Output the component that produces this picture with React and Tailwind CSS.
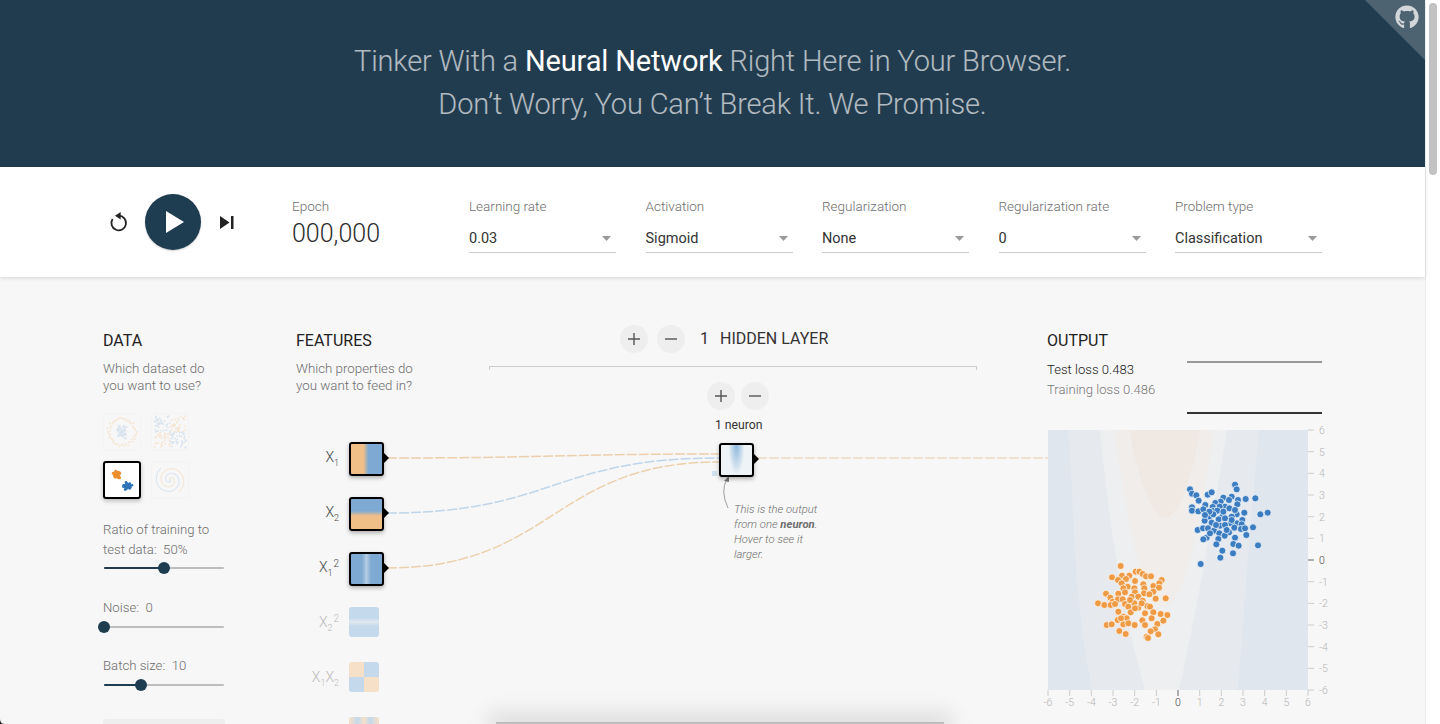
import React from "react";
import { FaGithub } from "react-icons/fa";

const font = "font-['Roboto','Liberation_Sans',sans-serif]";

function rnd(seed) {
  const v = Math.sin(seed * 127.1 + 311.7) * 43758.5453;
  return v - Math.floor(v);
}
function gauss(seed) {
  return (rnd(seed) + rnd(seed + 0.37) + rnd(seed + 0.71) - 1.5) / 1.5;
}

const BLUE = [[165,29],[170,43],[30,43],[36,56],[49,61],[83,59],[95,52],[56,77],[197,72],[226,70],[130,68],[155,65],[147,75],[174,75],[122,80],[106,84],[172,88],[135,95],[119,95],[76,90],[36,97],[36,107],[55,109],[70,103],[98,96],[100,108],[148,100],[112,107],[193,113],[241,118],[263,113],[170,118],[128,123],[88,125],[100,118],[74,137],[116,133],[135,130],[155,125],[187,135],[171,145],[153,145],[95,143],[120,152],[135,150],[163,158],[53,165],[69,160],[84,160],[102,167],[185,148],[183,162],[195,160],[219,157],[118,175],[147,172],[80,188],[70,193],[134,182],[199,180],[165,188],[115,192],[109,208],[160,207],[176,212],[234,211],[127,227],[159,235],[121,248],[62,267],[90,175],[155,135],[140,165],[108,150],[88,110],[75,120],[130,110],[165,105]];
const ORANGE = [[92,33],[137,50],[148,50],[66,67],[96,62],[118,62],[158,57],[168,64],[183,64],[215,75],[84,75],[108,72],[95,85],[135,78],[160,88],[190,93],[208,85],[207,98],[113,95],[100,100],[133,100],[163,100],[190,110],[48,116],[85,116],[105,112],[135,112],[162,115],[178,118],[61,128],[68,140],[84,133],[98,133],[125,125],[145,125],[197,131],[227,130],[24,145],[43,150],[62,150],[75,147],[105,147],[133,145],[158,137],[172,153],[115,155],[145,158],[85,170],[122,172],[135,160],[180,155],[190,172],[212,177],[232,180],[100,185],[83,195],[110,190],[165,175],[157,196],[185,190],[220,197],[50,210],[65,208],[100,208],[115,205],[134,210],[165,210],[202,207],[195,223],[88,228],[107,237],[182,229],[170,245],[205,238],[174,249],[93,190],[155,145],[120,135]];

function Thumb({ active, children }) {
  return (
    <div
      className={
        active
          ? "w-[38px] h-[38px] rounded-[3px] border-[2px] border-black bg-white shadow-[0_2px_4px_rgba(0,0,0,0.25)] overflow-hidden"
          : "w-[38px] h-[38px] rounded-[3px] border border-[#f0f0f0] bg-[#f8f8f8] overflow-hidden"
      }
    >
      <svg viewBox="0 0 36 36" className="w-full h-full block">{children}</svg>
    </div>
  );
}

function Dots({ pts, color, r = 0.9 }) {
  return pts.map((p, i) => <circle key={i} cx={p[0]} cy={p[1]} r={r} fill={color} />);
}

const circleBlue = Array.from({ length: 50 }, (_, i) => [18 + gauss(i + 1) * 8, 18 + gauss(i + 50) * 8]);
const circleOrange = Array.from({ length: 50 }, (_, i) => {
  const a = (i / 50) * Math.PI * 2;
  const R = 12 + rnd(i + 9) * 3;
  return [18 + Math.cos(a) * R, 18 + Math.sin(a) * R];
});
const xorPts = Array.from({ length: 150 }, (_, i) => [2 + rnd(i + 200) * 32, 2 + rnd(i + 400) * 32]);
const gaussA = Array.from({ length: 60 }, (_, i) => [12.5 + gauss(i + 700) * 5, 12.5 + gauss(i + 800) * 6]);
const gaussB = Array.from({ length: 60 }, (_, i) => [24 + gauss(i + 900) * 6, 24.5 + gauss(i + 1000) * 5.5]);

function spiral(offset) {
  let d = "";
  for (let i = 0; i <= 60; i++) {
    const t = (i / 60) * Math.PI * 3.2;
    const R = (i / 60) * 15;
    const x = 18 + Math.cos(t + offset) * R;
    const y = 18 + Math.sin(t + offset) * R;
    d += (i ? "L" : "M") + x.toFixed(2) + " " + y.toFixed(2);
  }
  return d;
}

function Track({ fill, className }) {
  return (
    <div className={`relative h-[2px] w-[120px] ml-[1px] bg-[#bdbdbd] rounded-full ${className}`}>
      <div className="h-full bg-[#1f3d51] rounded-full" style={{ width: fill }} />
      <div
        className="absolute top-[-5px] w-[12px] h-[12px] ml-[-6px] rounded-full bg-[#1f3d51]"
        style={{ left: fill }}
      />
    </div>
  );
}

function Select({ label, value, className = "w-[147px]" }) {
  return (
    <div className={className}>
      <div className="text-[13.5px] leading-[18px] text-[#6e6e6e] font-light mt-[-1px] mb-[9px]">{label}</div>
      <div className="flex items-center justify-between h-[29px] pt-[1px] pr-[5px] border-b border-[#cccccc] text-[14.500px] leading-[28px] text-[#333]">
        <span>{value}</span>
        <svg width="9" height="5" viewBox="0 0 9 5"><path d="M0 0h9L4.500 5z" fill="#999" /></svg>
      </div>
    </div>
  );
}

function Round({ kind, className = "" }) {
  return (
    <div className={`w-[28px] h-[28px] rounded-full bg-[#eeeeee] flex items-center justify-center ${className}`}>
      <svg width="12" height="12" viewBox="0 0 12 12">
        <path d={kind === "+" ? "M0 6h12M6 0v12" : "M0 6h12"} stroke="#555" strokeWidth="1.400" fill="none" />
      </svg>
    </div>
  );
}

function Node({ gradient, active, className = "" }) {
  return active ? (
    <div className={`relative w-[35px] h-[34px] shrink-0 rounded-[3px] border-[2px] border-black shadow-[0_2px_4px_rgba(0,0,0,0.3)] ${gradient} ${className}`}>
      <div className="absolute top-[9px] right-[-7px] w-0 h-0 border-y-[5px] border-y-transparent border-l-[5px] border-l-black" />
    </div>
  ) : (
    <div className={`w-[30px] h-[30px] shrink-0 rounded-[3px] ${gradient} ${className}`} />
  );
}

function Feature({ label, gradient, active }) {
  return (
    <div className="h-[55px] flex items-start justify-end">
      <div className={`mr-[10px] mt-[5px] text-[14px] leading-[20px] font-light whitespace-nowrap ${active ? "text-[#444]" : "text-[#bbb]"}`}>
        {label}
      </div>
      <div className="w-[35px] shrink-0">
        <Node gradient={gradient} active={active} />
      </div>
    </div>
  );
}

const S = ({ children }) => <span className="relative text-[9px] top-[4px]">{children}</span>;
const P = ({ children }) => <span className="relative text-[10px] top-[-5px] ml-[1px]">{children}</span>;

function Links() {
  const o = "#ecd0ab";
  const b = "#bfd5e9";
  const dash = "10 2";
  return (
    <svg width="760" height="200" className="absolute left-0 top-[115px] pointer-events-none overflow-visible">
      {/* origin at (296, 447) */}
      <path d="M91 11 C257 11 257 7 423 7" fill="none" stroke={o} strokeWidth="1.500" strokeDasharray={dash} />
      <path d="M91 66 C257 66 257 11 423 11" fill="none" stroke={b} strokeWidth="1.500" strokeDasharray={dash} />
      <path d="M91 121 C257 121 257 15 423 15" fill="none" stroke={o} strokeWidth="1.500" strokeDasharray={dash} />
      <path d="M461 11 H752" fill="none" stroke="#eedcc4" strokeWidth="1.500" strokeDasharray={dash} />
      <path d="M432 61 Q424 44 431 32" fill="none" stroke="#888" strokeWidth="0.800" />
      <path d="M433 29 L428 34 L433 35z" fill="#777" />
    </svg>
  );
}

function Plot() {
  const ticks = [6, 5, 4, 3, 2, 1, 0, -1, -2, -3, -4, -5, -6];
  const u = 260 / 12;
  return (
    <svg width="280" height="280" className="block overflow-visible" viewBox="0 0 280 280">
      <rect x="0" y="0" width="260" height="260" fill="#dfe6ee" />
      <path d="M21 0 L24 60 Q28 180 44 260 L190 260 Q200 120 211 0 Z" fill="#e6eaef" />
      <path d="M52 0 Q66 150 97 260 L131 260 Q155 150 179 0 Z" fill="#eeeff0" />
      <path d="M66 0 Q116 354 166 0 Z" fill="#f0edea" />
      <path d="M81 0 Q117 176 153 0 Z" fill="#f0e9e3" />
      {ORANGE.map((p, i) => (
        <circle key={"o" + i} cx={1090 + p[0] / 3 - 1048} cy={555 + p[1] / 3 - 430} r="3.500" fill="#ef9b46" stroke="#fff" strokeWidth="0.700" />
      ))}
      {BLUE.map((p, i) => (
        <circle key={"b" + i} cx={1180 + p[0] / 3 - 1048} cy={475 + p[1] / 3 - 430} r="3.500" fill="#3b7dc0" stroke="#fff" strokeWidth="0.700" />
      ))}
      {ticks.map((t) => {
        const y = (6 - t) * u;
        return (
          <g key={"r" + t}>
            <line x1="260" x2="266" y1={y} y2={y} stroke={t === 0 ? "#666" : "#ccc"} />
            <text x="271" y={y + 4} fontSize="10.500" fill={t === 0 ? "#444" : "#b5b5b5"} fontWeight="300">{t}</text>
          </g>
        );
      })}
      {ticks.map((t) => {
        const x = (t + 6) * u;
        return (
          <g key={"b" + t}>
            <line x1={x} x2={x} y1="260" y2="266" stroke={t === 0 ? "#666" : "#ccc"} />
            <text x={x} y="276" textAnchor="middle" fontSize="10.500" fill={t === 0 ? "#444" : "#b5b5b5"} fontWeight="300">{t}</text>
          </g>
        );
      })}
    </svg>
  );
}

export default function App() {
  return (
    <div className={`relative flex w-[1440px] h-[724px] overflow-hidden bg-white ${font}`}>
      <div className="w-[1425px] h-full flex flex-col shrink-0">
        <header className="relative h-[167px] shrink-0 bg-[#223c4f] flex flex-col items-center justify-center pb-[2px] text-[29px] leading-[43px] font-light text-white/65 tracking-[-0.15px]">
          <div>
            Tinker With a <span className="font-normal text-white">Neural Network</span> Right Here in Your Browser.
          </div>
          <div>Don’t Worry, You Can’t Break It. We Promise.</div>
          <svg width="60" height="60" viewBox="0 0 60 60" className="absolute top-0 right-0">
            <path d="M0 0H60V60Z" fill="#ffffff" fillOpacity="0.2" />
          </svg>
          <FaGithub className="absolute top-[5px] right-[6px] text-[24px] text-[#d3d7da]" />
        </header>

        <div className="relative z-10 h-[110px] shrink-0 bg-white shadow-[0_1px_4px_rgba(0,0,0,0.14)] flex items-start pt-[27px]">
          <div className="flex items-center ml-[108px] w-[184px]">
            <svg width="20" height="22" viewBox="0 0 20 22" className="shrink-0">
              <path d="M4.600 8A7.300 7.300 0 1 0 10.700 4.700" fill="none" stroke="#222" strokeWidth="1.800" />
              <path d="M12.700 1V8.500L7 4.700z" fill="#222" />
            </svg>
            <div className="ml-[17px] w-[56px] h-[56px] rounded-full bg-[#1f3d51] shadow-[0_1px_2px_rgba(0,0,0,0.2)] flex items-center justify-center">
              <svg width="18" height="22" viewBox="0 0 18 22" className="ml-[3px]"><path d="M0 0 L18 11 L0 22z" fill="#fff" /></svg>
            </div>
            <svg width="14" height="13" viewBox="0 0 14 13" className="ml-[19px]">
              <path d="M0 0 L9.500 6.500 L0 13z" fill="#222" />
              <rect x="11" y="0" width="2.500" height="13" fill="#222" />
            </svg>
          </div>
          <div className="w-[177px]">
            <div className="text-[13.5px] leading-[18px] text-[#6e6e6e] font-light mt-[3px]">Epoch</div>
            <div className="text-[25px] leading-[32px] text-[#2c2c2c] font-light mt-[3px]">000,000</div>
          </div>
          <div className="flex gap-[29.500px] mt-[4px]">
            <Select label="Learning rate" value="0.03" />
            <Select label="Activation" value="Sigmoid" />
            <Select label="Regularization" value="None" />
            <Select label="Regularization rate" value="0" />
            <Select label="Problem type" value="Classification" />
          </div>
        </div>

        <main className="flex-1 min-h-0 bg-[#f7f7f7] flex pl-[103px] pt-[55px] overflow-hidden">
          {/* DATA */}
          <section className="w-[193px] shrink-0">
            <h4 className="text-[16px] leading-[18px] text-[#222]">DATA</h4>
            <p className="mt-[10px] text-[13.300px] leading-[17px] text-[#6e6e6e] font-light">
              Which dataset do<br />you want to use?
            </p>
            <div className="mt-[19px] grid grid-cols-[38px_38px] gap-x-[10px] gap-y-[10px]">
              <div className="opacity-45">
                <Thumb>
                  <Dots pts={circleOrange} color="#f3cfa4" />
                  <Dots pts={circleBlue} color="#b4cde4" />
                </Thumb>
              </div>
              <div className="opacity-45">
                <Thumb>
                  {xorPts.map((p, i) => (
                    <circle key={i} cx={p[0]} cy={p[1]} r="0.900" fill={(p[0] - 18) * (p[1] - 18) > 0 ? "#b4cde4" : "#f3cfa4"} />
                  ))}
                </Thumb>
              </div>
              <Thumb active>
                <Dots pts={gaussA} color="#ee8f2f" r={1.300} />
                <Dots pts={gaussB} color="#2f74b8" r={1.300} />
              </Thumb>
              <div className="opacity-55">
                <Thumb>
                  <path d={spiral(0.3)} fill="none" stroke="#c6d8ea" strokeWidth="1.100" />
                  <path d={spiral(3.44)} fill="none" stroke="#f3d9ba" strokeWidth="1.100" />
                </Thumb>
              </div>
            </div>
            <div className="mt-[21px] text-[13.200px] leading-[20px] text-[#6e6e6e] font-light">
              Ratio of training to<br />test data:&nbsp; 50%
            </div>
            <Track fill="50%" className="mt-[7px]" />
            <div className="mt-[29px] text-[13.200px] leading-[20px] text-[#6e6e6e] font-light">Noise:&nbsp; 0</div>
            <Track fill="0%" className="mt-[8px]" />
            <div className="mt-[28px] text-[13.200px] leading-[20px] text-[#6e6e6e] font-light">Batch size:&nbsp; 10</div>
            <Track fill="31%" className="mt-[8px]" />
            <div className="mt-[33px] w-[122px] h-[30px] rounded-[3px] bg-[#eeeeee]" />
          </section>

          {/* NETWORK */}
          <section className="relative w-[751px] shrink-0 flex items-start">
            <Links />
            <div className="w-[193px] shrink-0">
              <h4 className="text-[16px] leading-[18px] text-[#222]">FEATURES</h4>
              <p className="mt-[10px] text-[13.300px] leading-[17px] text-[#6e6e6e] font-light">
                Which properties do<br />you want to feed in?
              </p>
              <div className="mt-[48px] w-[88px]">
                <Feature active label={<>X<S>1</S></>} gradient="bg-[linear-gradient(90deg,#f0bf88_0%,#f0bf88_40%,#7ea9d3_56%,#7ea9d3_100%)]" />
                <Feature active label={<>X<S>2</S></>} gradient="bg-[linear-gradient(180deg,#7ea9d3_0%,#7ea9d3_40%,#f0bf88_56%,#f0bf88_100%)]" />
                <Feature active label={<>X<S>1</S><P>2</P></>} gradient="bg-[linear-gradient(90deg,#7ea9d3_0%,#7ea9d3_35%,#b3cde3_50%,#7ea9d3_65%,#7ea9d3_100%)]" />
                <Feature label={<>X<S>2</S><P>2</P></>} gradient="bg-[linear-gradient(180deg,#c5d9ec_0%,#c5d9ec_36%,#e0e9f1_50%,#c5d9ec_64%,#c5d9ec_100%)]" />
                <Feature label={<>X<S>1</S>X<S>2</S></>} gradient="bg-[conic-gradient(#c5d9ec_0deg,#c5d9ec_90deg,#f6e0c8_90deg,#f6e0c8_180deg,#c5d9ec_180deg,#c5d9ec_270deg,#f6e0c8_270deg,#f6e0c8_360deg)]" />
                <Feature label="" gradient="bg-[linear-gradient(90deg,#f6e0c8_0%,#c5d9ec_30%,#f6e0c8_50%,#c5d9ec_70%,#f6e0c8_100%)]" />
              </div>
            </div>

            <div className="w-[488px] shrink-0">
              <div className="h-[28px] mt-[-7px] flex items-center pl-[131px]">
                <Round kind="+" />
                <Round kind="-" className="ml-[9px]" />
                <span className="ml-[15px] text-[16px] text-[#333]">1</span>
                <span className="ml-[11px] text-[16px] text-[#333]">HIDDEN LAYER</span>
              </div>
              <div className="mt-[13px] h-[4px] border-t border-x border-[#cccccc]" />
              <div className="mt-[12px] pl-[218px] flex gap-[6px]">
                <Round kind="+" />
                <Round kind="-" />
              </div>
              <div className="mt-[7px] pl-[226px] text-[12.200px] leading-[16px] text-[#333]">1 neuron</div>
              <div className="mt-[10px] ml-[230px]">
                <Node active gradient="bg-[radial-gradient(ellipse_8px_30px_at_50%_0%,#8cb7dc_0%,#cfe0ee_70%,#eef3f7_100%)] bg-[#eef3f7]" />
              </div>
              <div className="mt-[-6px] ml-[223px] w-[5px] h-[5px] bg-[#d3e1ec]" />
              <p className="mt-[26px] ml-[245px] w-[100px] text-[11.300px] leading-[15px] italic font-light text-[#6e6e6e]">
                This is the output from one <b className="font-bold">neuron</b>. Hover to see it larger.
              </p>
            </div>
          </section>

          {/* OUTPUT */}
          <section className="flex-1 min-w-0">
            <div className="flex items-start">
              <div className="w-[140px] shrink-0">
                <h4 className="text-[16px] leading-[18px] text-[#222]">OUTPUT</h4>
                <div className="mt-[10px] text-[13.100px] leading-[20px] font-light text-[#222]">Test loss 0.483</div>
                <div className="text-[13.100px] leading-[20px] font-light text-[#777]">Training loss 0.486</div>
              </div>
              <div className="w-[135px] h-[53px] mt-[29px] border-t-[2px] border-b-[2px] border-t-[#999] border-b-[#333]" />
            </div>
            <div className="mt-[16px] ml-[1px]">
              <Plot />
            </div>
          </section>
        </main>
      </div>

      {/* scrollbar */}
      <div className="w-[15px] h-full shrink-0 bg-white border-l border-[#ececec] pl-[3px] pt-[3px]">
        <div className="w-[8px] h-[172px] rounded-full bg-[#c2c2c2]" />
      </div>

      {/* sheet edge at the bottom */}
      <div className="absolute left-[496px] bottom-0 w-[448px] h-[2px] bg-[#bdbdbd] shadow-[0_0_22px_8px_rgba(0,0,0,0.13)]" />
      <svg width="5" height="5" viewBox="0 0 5 5" className="absolute left-0 bottom-0">
        <path d="M0 0 Q0 5 5 5 H0Z" fill="#222" />
      </svg>
    </div>
  );
}
